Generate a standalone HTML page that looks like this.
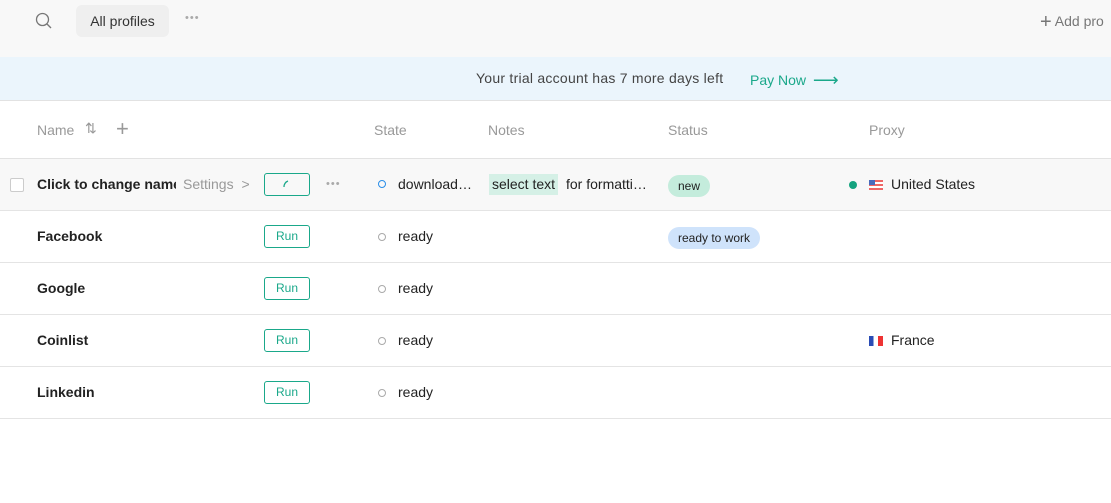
<!DOCTYPE html><html><head><style>
*{box-sizing:border-box;margin:0;padding:0}
body{width:1111px;height:503px;background:#fff;font-family:"Liberation Sans",sans-serif;font-size:14px;color:#222;position:relative;overflow:hidden}
.a{position:absolute}
.top{left:0;top:0;width:1111px;height:57px;background:#f8f8f8}
.banner{left:0;top:57px;width:1111px;height:44px;background:#ebf5fc;border-bottom:1px solid #e2e2e2}
.hdr{color:#999;font-size:14px;top:122px}
.row{left:0;width:1111px;height:52px;border-bottom:1px solid #e4e4e4}
.name{left:37px;font-weight:bold;font-size:14px;color:#222}
.run{left:264px;width:46px;height:23px;border:1px solid #1aa88a;border-radius:3px;color:#1aa88a;font-size:12px;text-align:center;line-height:21px}
.dot{left:378px;width:8px;height:8px;border:1px solid #aaa;border-radius:50%}
.st{left:398px}
</style></head><body>
<div class="a top"></div>
<svg class="a" style="left:35px;top:12px" width="18" height="18" viewBox="0 0 18 18" fill="none" stroke="#777" stroke-width="1.3"><circle cx="7.5" cy="7.5" r="6"/><path d="M12 12l4 4"/></svg>
<div class="a" style="left:76px;top:5px;width:93px;height:32px;background:#efefef;border-radius:6px;line-height:32px;text-align:center;color:#333">All profiles</div>
<div class="a" style="left:185px;top:12px;color:#aaa;letter-spacing:1px;font-size:11px">•••</div>
<div class="a" style="left:1040px;top:11px;color:#777;font-size:14px"><span style="font-size:20px;vertical-align:-2px">+</span> Add pro</div>
<div class="a banner"></div>
<div class="a" style="left:476px;top:70px;color:#444;letter-spacing:0.25px">Your trial account has 7 more days left</div>
<div class="a" style="left:750px;top:70px;color:#1aa88a">Pay Now <span style="font-size:18px;vertical-align:-1px;margin-left:3px">⟶</span></div>
<div class="a hdr" style="left:37px">Name</div>
<div class="a hdr" style="left:85px;top:120px">⇅</div>
<div class="a hdr" style="left:116px;top:116px;font-size:22px">+</div>
<div class="a hdr" style="left:374px">State</div>
<div class="a hdr" style="left:488px">Notes</div>
<div class="a hdr" style="left:668px">Status</div>
<div class="a hdr" style="left:869px">Proxy</div>
<div class="a" style="left:0;top:158px;width:1111px;height:1px;background:#e2e2e2"></div>
<div class="a row" style="top:159px;background:#f8f8f8"></div>
<div class="a" style="left:10px;top:178px;width:14px;height:14px;border:1px solid #ccc;border-radius:2px;background:#fff"></div>
<div class="a name" style="top:176px;width:139px;overflow:hidden;white-space:nowrap">Click to change name</div>
<div class="a" style="left:183px;top:176px;color:#999">Settings <span style="margin-left:4px">&gt;</span></div>
<div class="a run" style="top:173px"><svg width="14" height="14" style="margin-top:3px" viewBox="0 0 14 14" fill="none" stroke="#1aa88a" stroke-width="1.3"><path d="M4 10A6 6 0 0 1 8 4"/></svg></div>
<div class="a" style="left:326px;top:178px;color:#aaa;letter-spacing:1px;font-size:11px">•••</div>
<div class="a dot" style="top:180px;border-color:#2a8ee8"></div>
<div class="a st" style="top:176px">download…</div>
<div class="a" style="left:489px;top:174px;background:#d5f0e6;padding:1px 3px;height:21px;line-height:19px">select text</div>
<div class="a" style="left:566px;top:176px">for formatti…</div>
<div class="a" style="left:668px;top:175px;width:42px;height:22px;border-radius:11px;background:#c4ecdc;font-size:12px;text-align:center;line-height:22px">new</div>
<div class="a" style="left:849px;top:181px;width:8px;height:8px;border-radius:50%;background:#14a37f"></div>
<div class="a" style="left:869px;top:180px;width:14px;height:10px;background:repeating-linear-gradient(#e66 0 2px,#fff 2px 4px)"><div style="width:6px;height:5px;background:#4a6bbd"></div></div>
<div class="a" style="left:891px;top:176px">United States</div>
<div class="a row" style="top:211px"></div>
<div class="a name" style="top:228px">Facebook</div>
<div class="a run" style="top:225px">Run</div>
<div class="a dot" style="top:233px"></div><div class="a st" style="top:228px">ready</div>
<div class="a" style="left:668px;top:227px;width:92px;height:22px;border-radius:11px;background:#cfe3fb;font-size:12px;text-align:center;line-height:22px">ready to work</div>
<div class="a row" style="top:263px"></div>
<div class="a name" style="top:280px">Google</div>
<div class="a run" style="top:277px">Run</div>
<div class="a dot" style="top:285px"></div><div class="a st" style="top:280px">ready</div>
<div class="a row" style="top:315px"></div>
<div class="a name" style="top:332px">Coinlist</div>
<div class="a run" style="top:329px">Run</div>
<div class="a dot" style="top:337px"></div><div class="a st" style="top:332px">ready</div>
<div class="a" style="left:869px;top:336px;width:14px;height:10px;background:linear-gradient(90deg,#2a4cb5 0 33%,#fff 33% 66%,#e33 66%)"></div>
<div class="a" style="left:891px;top:332px">France</div>
<div class="a row" style="top:367px"></div>
<div class="a name" style="top:384px">Linkedin</div>
<div class="a run" style="top:381px">Run</div>
<div class="a dot" style="top:389px"></div><div class="a st" style="top:384px">ready</div>
</body></html>
